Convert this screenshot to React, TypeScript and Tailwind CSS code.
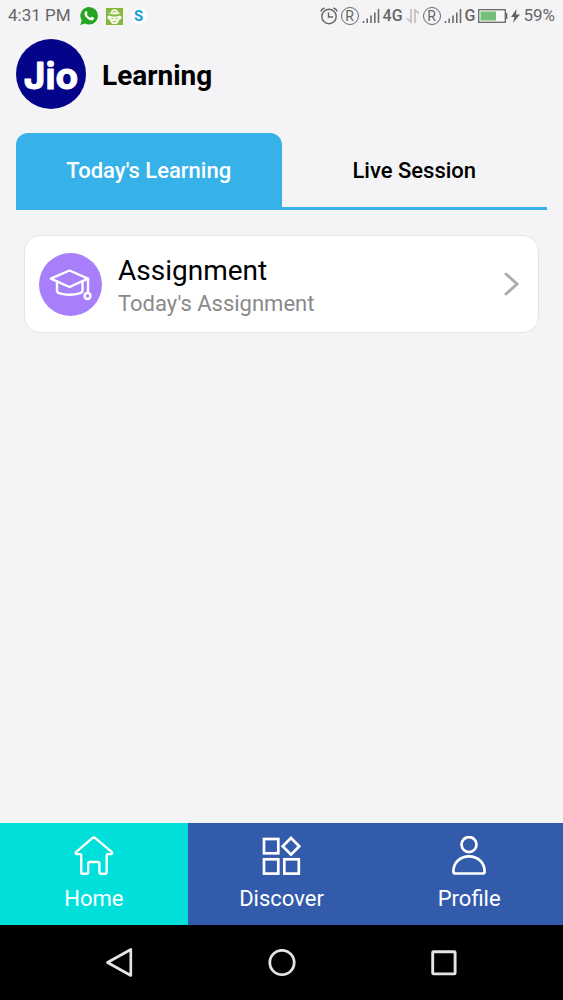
import React, { useState } from "react";

type IconProps = { className?: string };

function AlarmIcon() {
  return (
    <svg width="18" height="18" viewBox="0 0 18 18" fill="none" stroke="#666" strokeWidth="1.4" aria-hidden="true">
      <circle cx="9" cy="9.500" r="7.200" />
      <path d="M8.500 5.500V10H13M.8 4.500Q1.500 2 4.500 1M17.200 4.500Q16.500 2 13.500 1" />
    </svg>
  );
}

function RoamingIcon() {
  return (
    <span className="flex h-[18px] w-[18px] items-center justify-center rounded-full border border-[#666] text-[14px] leading-none">
      R
    </span>
  );
}

function SignalIcon() {
  return (
    <svg width="18" height="16" viewBox="0 0 18 16" stroke="#6b6b6b" strokeWidth="1.6" aria-hidden="true">
      <path d="M1.500 13v2M5.200 10.500V15M9 7.500V15M12.800 4.500V15M16.500 1v14" />
    </svg>
  );
}

function DataIcon() {
  return (
    <svg width="14" height="16" viewBox="0 0 14 16" fill="none" stroke="#bdbdbd" strokeWidth="1.6" aria-hidden="true">
      <path d="M5 1v13L1 10.500M9 15V2l4 3.500" />
    </svg>
  );
}

function BatteryIcon() {
  return (
    <svg width="30" height="14" viewBox="0 0 30 14" aria-hidden="true">
      <rect x="0.7" y="0.7" width="26.600" height="12.600" fill="#f8f8f8" stroke="#666" strokeWidth="1.3" />
      <rect x="2.500" y="2.500" width="15.500" height="9" fill="#76bd78" />
      <path d="M28.500 4v6" stroke="#666" strokeWidth="1.6" />
    </svg>
  );
}

function BoltIcon() {
  return (
    <svg width="9" height="14" viewBox="0 0 9 14" fill="#606060" aria-hidden="true">
      <path d="M5.500 0 0 8h3.500L2 14l7-8.500H5z" />
    </svg>
  );
}

function WhatsappBadge() {
  return (
    <svg width="18" height="18" viewBox="0 0 18 18" aria-hidden="true">
      <path d="M9.200 0a8.800 8.800 0 0 1 0 17.600 9 9 0 0 1-4.200-1L.3 18l1.400-4.600A8.800 8.800 0 0 1 9.200 0z" fill="#27a522" />
      <path
        d="M5.200 4.600c.8-.9 1.500-.6 1.900.5.5 1.200.5 1.400-.2 2.200.8 1.700 1.900 2.800 3.700 3.500.9-1.100 1.100-1.300 2.100-.7 1.600.8 1.700 1 1.200 2-1 1.700-3.200 1.500-5.200.3C6 10.900 3.200 7.400 5.200 4.600z"
        fill="#fff"
      />
    </svg>
  );
}

function GameBadge() {
  return (
    <svg width="17" height="17" viewBox="0 0 17 17" aria-hidden="true">
      <rect width="17" height="17" fill="#86b83c" />
      <path d="M4.800 4.500C5 2 6.500 1.200 8.500 1.200s3.500.8 3.800 3.300l2.500.5q-3 1.600-6.300 1.600T2.200 5z" fill="#f4f8e8" />
      <path d="M6.500 4q2-1 4 0" fill="none" stroke="#86b83c" strokeWidth="0.900" />
      <path d="M1.500 8.500Q3 7 4.500 8q4 1.200 8 0 1.500-1 3 .5.500 2.500-1.500 3-1 .5-1.300 2L11 16H6l-1.700-2.500q-.3-1.500-1.300-2-2-.5-1.500-3z" fill="#f4f8e8" />
      <path d="M5.500 10.500h1.500M10 10.500h1.500M7 13.500q1.500.7 3 0" fill="none" stroke="#86b83c" strokeWidth="0.900" />
    </svg>
  );
}

function CapIcon() {
  return (
    <svg
      className="h-[63px] w-[63px] shrink-0 rounded-full bg-[#a87ffb]"
      viewBox="0 0 63 63"
      fill="none"
      stroke="#fff"
      strokeWidth="2.400"
      strokeLinejoin="round"
      strokeLinecap="round"
      aria-hidden="true"
    >
      <path d="M30.500 17.500 11.800 25.700l18.700 8.300L49 25.700z" />
      <path d="M18 29v8.500q0 2 2 2.600 4.500 1.600 10.500 1.600T41 40.100q2.500-.6 2.500-2.600V29M49 26v13.500" />
      <circle cx="48.500" cy="43" r="3" />
    </svg>
  );
}

function HomeIcon({ className }: IconProps) {
  return (
    <svg className={className} viewBox="0 0 40 40" fill="none" stroke="currentColor" strokeWidth="2.400" strokeLinejoin="round" aria-hidden="true">
      <path d="M18.300 2.200 2.300 15.800q-1.500 1.700.5 2.300H6q1.200 0 1.200 1.200v17q0 1.500 1.500 1.500h4q1.500 0 1.500-1.500v-8.800q0-1.500 1.500-1.500h8.200q1.500 0 1.500 1.500v8.800q0 1.500 1.500 1.500h4.300q1.500 0 1.500-1.500v-17q0-1.200 1.200-1.200h3.200q2-.6.5-2.300L21.300 2.200q-1.500-1.200-3 0z" />
    </svg>
  );
}

function DiscoverIcon({ className }: IconProps) {
  return (
    <svg className={className} viewBox="0 0 40 40" fill="none" stroke="currentColor" strokeWidth="2.700" aria-hidden="true">
      <rect x="2" y="3" width="14.300" height="14.300" />
      <rect x="2" y="23.300" width="14.300" height="14.300" />
      <rect x="22.300" y="23.300" width="14.500" height="14.300" />
      <path d="m29 2 8.300 8.300-8.300 8.300-8.300-8.300z" />
    </svg>
  );
}

function ProfileIcon({ className }: IconProps) {
  return (
    <svg className={className} viewBox="0 0 40 40" fill="none" stroke="currentColor" strokeWidth="2.700" aria-hidden="true">
      <circle cx="20" cy="8.600" r="7.500" />
      <path d="M20 20.300c8.700 0 15.600 6.300 15.600 15.200q0 2-1.900 2H6.300q-1.900 0-1.900-2C4.400 26.600 11.300 20.300 20 20.300z" />
    </svg>
  );
}

const tabs = ["Today's Learning", "Live Session"];

const navItems = [
  { label: "Home", Icon: HomeIcon },
  { label: "Discover", Icon: DiscoverIcon },
  { label: "Profile", Icon: ProfileIcon },
];

export default function App() {
  const [tab, setTab] = useState(0);
  const [page, setPage] = useState("Home");

  return (
    <div className="flex min-h-screen flex-col bg-[#f4f3f6] font-['Roboto',sans-serif] text-black">
      <div className="flex h-8 items-center justify-between px-2 text-[17px] text-[#666]">
        <div className="flex items-center gap-2">
          <span>4:31 PM</span>
          <span className="flex items-center gap-2 pl-px">
            <WhatsappBadge />
            <GameBadge />
            <span className="flex h-4 w-4 items-center justify-center rounded-full bg-white text-[15px] leading-none font-bold text-[#159fdc]">
              S
            </span>
          </span>
        </div>
        <div className="flex items-center gap-[3px]">
          <AlarmIcon />
          <RoamingIcon />
          <SignalIcon />
          <span className="text-base font-medium">4G</span>
          <DataIcon />
          <RoamingIcon />
          <SignalIcon />
          <span className="text-base font-medium">G</span>
          <BatteryIcon />
          <BoltIcon />
          <span>59%</span>
        </div>
      </div>

      <header className="flex items-center gap-4 px-4 pt-[7px]">
        <svg className="h-[70px] w-[70px]" viewBox="0 0 70 70" role="img" aria-label="Jio">
          <circle cx="35" cy="35" r="35" fill="#04048a" />
          <text
            x="35"
            y="50"
            textAnchor="middle"
            fontSize="37"
            fill="#fff"
            stroke="#fff"
            strokeWidth="1"
            strokeLinejoin="round"
            className="font-['Inter',sans-serif] font-bold"
          >
            Jio
          </text>
        </svg>
        <h1 className="pt-1 text-[28px] font-bold">Learning</h1>
      </header>

      <div role="tablist" className="mx-4 mt-6 flex">
        {tabs.map((name, i) => (
          <button
            key={name}
            role="tab"
            aria-selected={tab === i}
            onClick={() => setTab(i)}
            className={
              "h-[77px] flex-1 border-b-[3px] border-[#36b2e9] pt-px text-[22px] font-medium " +
              (tab === i ? "rounded-t-xl bg-[#36b2e9] text-white" : "text-black")
            }
          >
            {name}
          </button>
        ))}
      </div>

      <main className="flex-1 px-6 pt-[25px]">
        <button className="flex w-full items-center gap-4 rounded-2xl border border-[#e4e3e6] bg-white px-[14px] py-[13px] text-left">
          <CapIcon />
          <span className="flex flex-1 flex-col pt-1">
            <span className="text-[28px] leading-9">Assignment</span>
            <span className="text-[22px] leading-[30px] text-[#8a8a8a]">Today's Assignment</span>
          </span>
          <svg className="mr-1 h-6 w-4" viewBox="0 0 16 24" fill="none" stroke="#adadad" strokeWidth="3" strokeLinecap="round" aria-hidden="true">
            <path d="m2 2 11 10L2 22" />
          </svg>
        </button>
      </main>

      <nav className="flex bg-[#335bab]">
        {navItems.map(({ label, Icon }) => (
          <button
            key={label}
            onClick={() => setPage(label)}
            className={
              "flex h-[102px] flex-1 flex-col items-center gap-2 pt-[13px] text-[22px] text-white " +
              (page === label ? "bg-[#00dfd9]" : "")
            }
          >
            <Icon className="h-10 w-10" />
            <span className="leading-[30px]">{label}</span>
          </button>
        ))}
      </nav>

      <div className="flex h-[75px] items-center justify-center gap-[134px] bg-black">
        <button aria-label="Back">
          <svg width="28" height="30" viewBox="0 0 28 30" fill="none" stroke="#e4e4e4" strokeWidth="2.700" strokeLinejoin="round">
            <path d="M24.800 1.500v26L1.500 14.500z" />
          </svg>
        </button>
        <button aria-label="Home screen">
          <svg width="28" height="28" viewBox="0 0 28 28" fill="none" stroke="#e4e4e4" strokeWidth="2.800">
            <circle cx="14" cy="13.500" r="12.200" />
          </svg>
        </button>
        <button aria-label="Recent apps">
          <svg width="28" height="28" viewBox="0 0 28 28" fill="none" stroke="#e4e4e4" strokeWidth="2.900">
            <rect x="2.700" y="2.700" width="22.400" height="22.200" rx="0.800" />
          </svg>
        </button>
      </div>
    </div>
  );
}
